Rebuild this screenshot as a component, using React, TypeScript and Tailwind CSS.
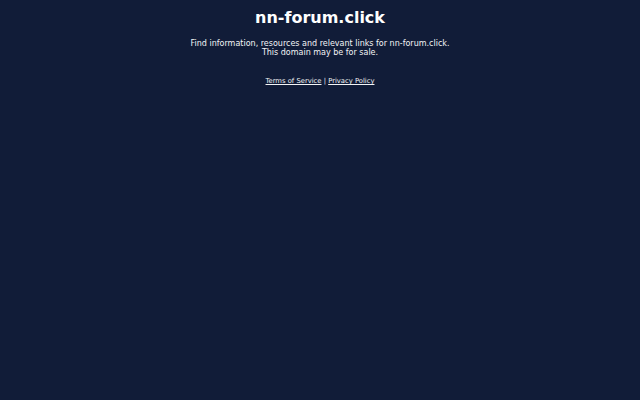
export default function App() {
  return (
    <div
      className="flex h-[400px] w-[640px] flex-col items-center bg-[#111c38] text-center"
      style={{ fontFamily: '"DejaVu Sans", sans-serif' }}
    >
      <h1 className="mt-[8px] text-[16px] font-bold leading-[20px] text-white">nn-forum.click</h1>
      <p className="mt-[11px] text-[8px] leading-[9px] text-gray-100">
        Find information, resources and relevant links for nn-forum.click.
        <br />
        This domain may be for sale.
      </p>
      <div className="mt-[20px] text-[6.8px] leading-[9px] text-gray-100">
        <a href="#" className="underline">Terms of Service</a> | <a href="#" className="underline">Privacy Policy</a>
      </div>
    </div>
  );
}
